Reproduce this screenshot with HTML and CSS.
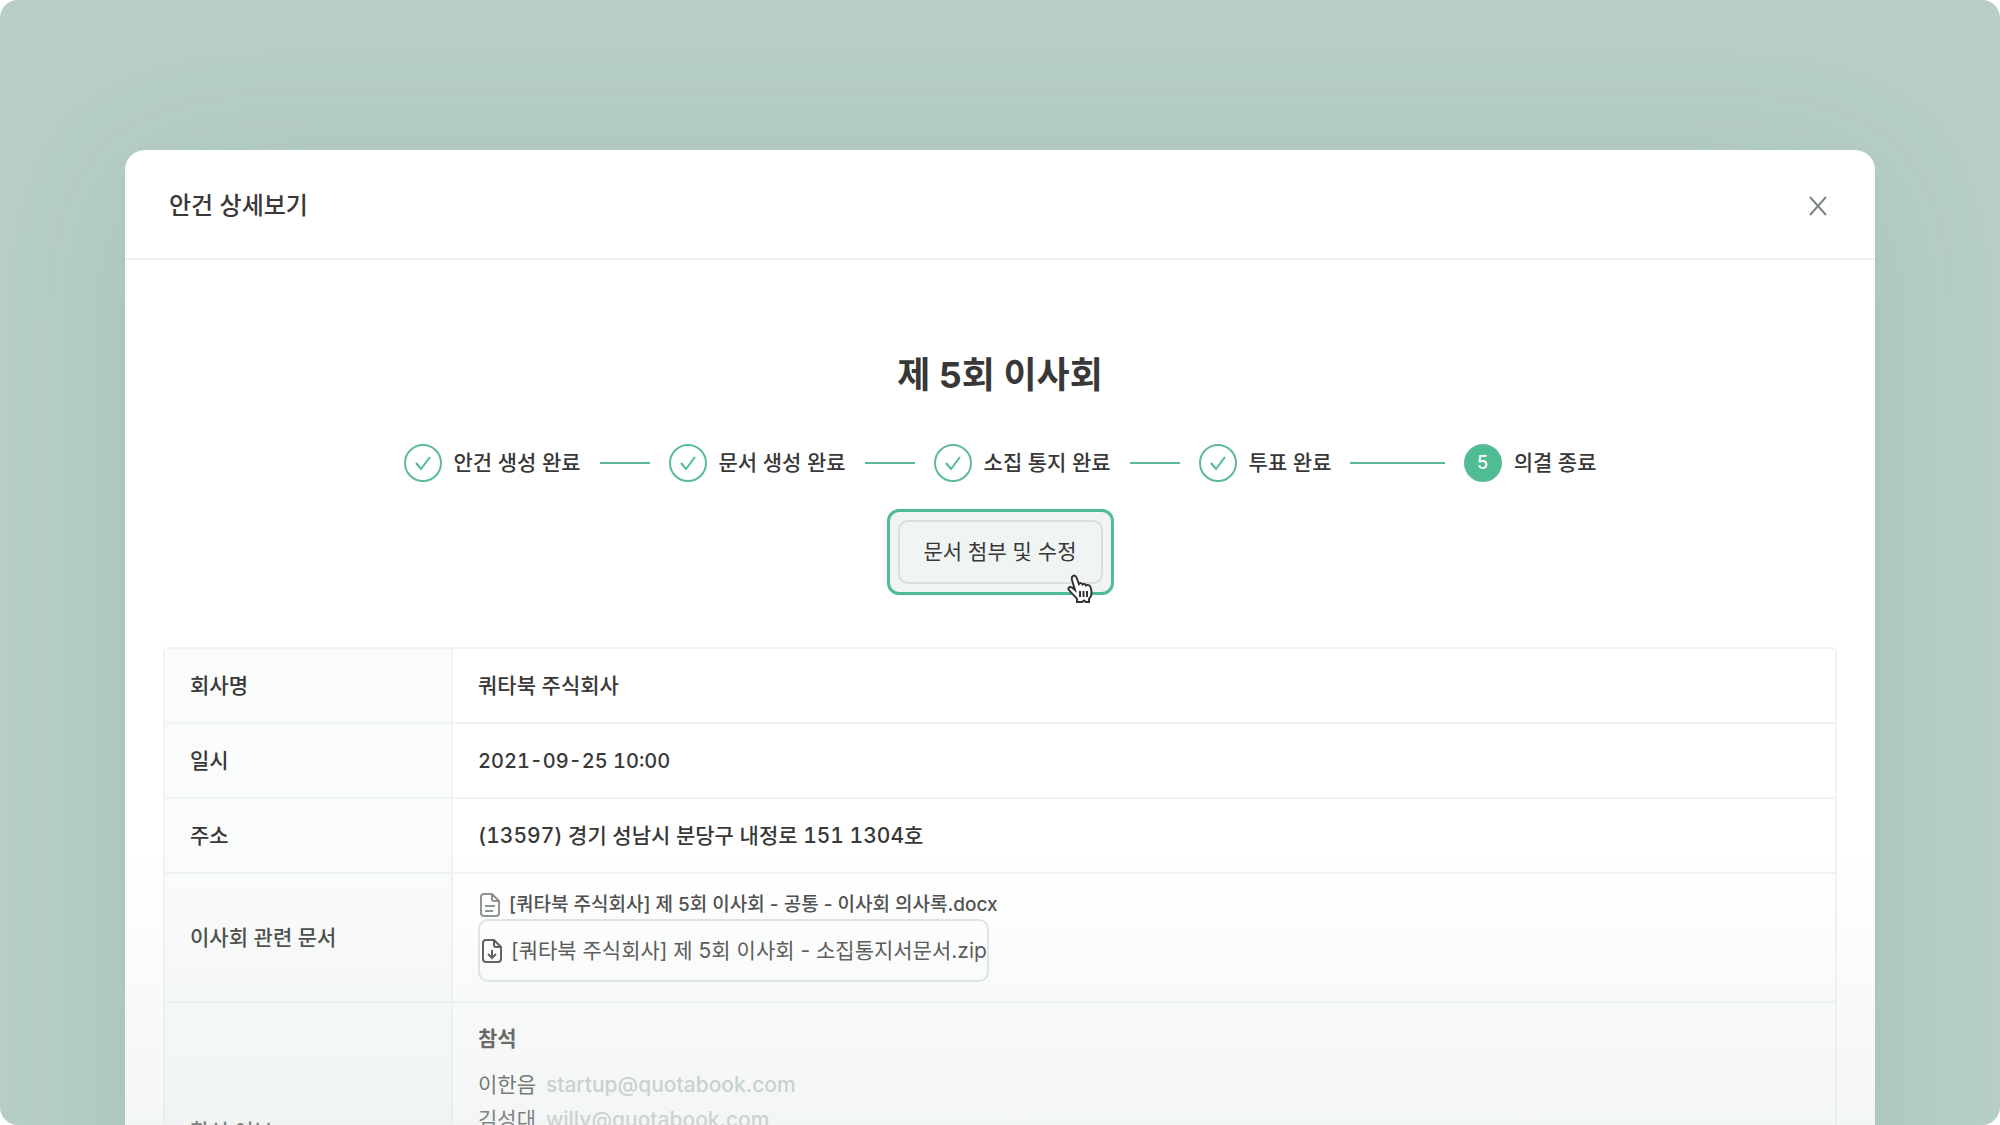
FILE: index.html
```
<!DOCTYPE html>
<html lang="ko">
<head>
    <meta charset="UTF-8">
    <meta name="viewport" content="width=device-width, initial-scale=1.0">
    <title>안건 상세보기</title>
    <link rel="stylesheet" href="styles.css">
</head>
<body>
    <div class="stage">
        <section class="modal">
            <header class="modal-header">
                <h2>안건 상세보기</h2>
                <button type="button" class="close" aria-label="닫기">
                    <svg width="18" height="20" viewBox="0 0 18 20"><path d="M1 1L17 19M17 1L1 19"/></svg>
                </button>
            </header>
            <div class="modal-body">
                <h1>제 5회 이사회</h1>
                <ol class="steps">
                    <li>
                        <span class="circle"><svg width="16" height="16" viewBox="0 0 16 16"><path d="M1 8L6 14L15 2"/></svg></span>
                        <span class="label">안건 생성 완료</span>
                    </li>
                    <li>
                        <span class="circle"><svg width="16" height="16" viewBox="0 0 16 16"><path d="M1 8L6 14L15 2"/></svg></span>
                        <span class="label">문서 생성 완료</span>
                    </li>
                    <li>
                        <span class="circle"><svg width="16" height="16" viewBox="0 0 16 16"><path d="M1 8L6 14L15 2"/></svg></span>
                        <span class="label">소집 통지 완료</span>
                    </li>
                    <li>
                        <span class="circle"><svg width="16" height="16" viewBox="0 0 16 16"><path d="M1 8L6 14L15 2"/></svg></span>
                        <span class="label">투표 완료</span>
                    </li>
                    <li>
                        <span class="circle active">5</span>
                        <span class="label">의결 종료</span>
                    </li>
                </ol>
                <div class="action">
                    <button type="button" class="edit-button"><span>문서 첨부 및 수정</span></button>
                    <svg class="cursor" width="27" height="30" viewBox="0 0 27 30">
                        <path d="M6 2C7.500 1 9 2 9.500 3.500L12 10C13 8.500 15 9 15.500 10.500C16.500 9.500 18.500 10 19 11.500C20.500 10.500 23 11 23.500 13C24.500 16 25 19 24 22L22 25V28H19L17 26.500L15 28H10V25C8 22 5 20 2 16C0.500 14 2.500 12 5 13.500L8 16L5 6C4.500 4 5 2.500 6 2Z"/>
                        <path d="M13 17V23M16.500 17V23M20 17V23"/>
                    </svg>
                </div>
                <table class="detail">
                    <tr>
                        <th scope="row">회사명</th>
                        <td>쿼타북 주식회사</td>
                    </tr>
                    <tr>
                        <th scope="row">일시</th>
                        <td><time datetime="2021-09-25T10:00">2021-09-25 10:00</time></td>
                    </tr>
                    <tr>
                        <th scope="row">주소</th>
                        <td class="address">(13597) 경기 성남시 분당구 내정로 151 1304호</td>
                    </tr>
                    <tr>
                        <th scope="row">이사회 관련 문서</th>
                        <td class="files">
                            <a href="#" class="file">
                                <svg class="light" width="20" height="24" viewBox="0 0 20 24"><path d="M12 1H4Q1 1 1 4V20Q1 23 4 23H16Q19 23 19 20V8ZM12 1V6Q12 8 14 8H19M5 13H15M5 18H13"/></svg>
                                [쿼타북 주식회사] 제 5회 이사회 - 공통 - 이사회 의사록.docx
                            </a>
                            <a href="#" class="file boxed">
                                <svg width="20" height="24" viewBox="0 0 20 24"><path d="M12 1H4Q1 1 1 4V20Q1 23 4 23H16Q19 23 19 20V8ZM12 1V6Q12 8 14 8H19M10 11V18M6 15L10 19L14 15"/></svg>
                                [쿼타북 주식회사] 제 5회 이사회 - 소집통지서문서.zip
                            </a>
                        </td>
                    </tr>
                    <tr class="attend">
                        <th scope="row">참석 여부</th>
                        <td>
                            <h3>참석</h3>
                            <p>이한음 <a href="mailto:startup@quotabook.com">startup@quotabook.com</a></p>
                            <p>김성대 <a href="mailto:willy@quotabook.com">willy@quotabook.com</a></p>
                        </td>
                    </tr>
                </table>
            </div>
        </section>
        <div class="fade"></div>
    </div>
</body>
</html>
```
FILE: styles.css
```
* {
    box-sizing: border-box;
}
body {
    margin: 0;
    background-color: #fff;
    color: #383838;
    font-family: Inter, "Noto Sans CJK KR", sans-serif;
    font-size: 21px;
    font-weight: 500;
    line-height: 32px;
}
h1, h2, h3, p, ol {
    margin: 0;
    padding: 0;
}
button {
    font: inherit;
    color: inherit;
    cursor: pointer;
}
.stage {
    position: relative;
    height: 100vh;
    padding: 150px 125px 0;
    overflow: hidden;
    background-color: #b7cfc8;
    border-radius: 18px;
}
.modal {
    background-color: #fff;
    border-radius: 20px;
    box-shadow: 0 20px 150px rgba(60, 90, 80, 0.14);
}
.modal-header {
    display: flex;
    align-items: center;
    justify-content: space-between;
    height: 110px;
    padding: 4px 44px 0;
    border-bottom: 2px solid #eff4f2;
}
.modal-header h2 {
    font-size: 24px;
    font-weight: 500;
}
.close {
    padding: 4px;
    border: none;
    background: none;
    line-height: 0;
}
.close svg {
    fill: none;
    stroke: #7d8582;
    stroke-width: 2;
}
.modal-body {
    padding: 89px 38px 0;
}
h1 {
    font-size: 36px;
    font-weight: 700;
    line-height: 52px;
    text-align: center;
}
.steps {
    display: flex;
    max-width: 1193px;
    margin: 43px auto 27px;
    list-style: none;
}
.steps li {
    display: flex;
    flex: 1;
    align-items: center;
    gap: 12px;
    white-space: nowrap;
}
.steps li:last-child {
    flex: none;
}
.steps li:not(:last-child)::after {
    content: "";
    flex: 1;
    height: 2px;
    margin: 0 19px 0 7px;
    background-color: #5cba98;
}
.circle {
    display: flex;
    align-items: center;
    justify-content: center;
    width: 38px;
    height: 38px;
    border: 2px solid #5cba98;
    border-radius: 50%;
}
.circle svg {
    fill: none;
    stroke: #4fbd93;
    stroke-width: 2;
}
.circle.active {
    background-color: #4fbd93;
    color: #fff;
    font-size: 18px;
}
.action {
    position: relative;
    width: 227px;
    margin: 0 auto 52px;
}
.edit-button {
    display: block;
    width: 100%;
    padding: 8px;
    border: 3px solid #4fbd93;
    border-radius: 12px;
    background-color: #f0f4f3;
    font-weight: 400;
}
.edit-button span {
    display: block;
    padding: 14px 0;
    border: 2px solid #d8dfdc;
    border-radius: 10px;
}
.cursor {
    position: absolute;
    right: 20px;
    bottom: -9px;
    fill: #fff;
    stroke: #333;
    stroke-width: 2;
}
.detail {
    width: 100%;
    border: 2px solid #eff3f2;
    border-radius: 6px;
    border-spacing: 0;
}
.detail th,
.detail td {
    height: 75px;
    padding: 0 25px;
    border-bottom: 2px solid #eff3f2;
    font-weight: 500;
    text-align: left;
}
.detail th {
    width: 288px;
    border-right: 2px solid #eff3f2;
    background-color: #fafcfb;
}
.detail time,
.detail .address {
    font-variant-numeric: tabular-nums;
}
.detail time {
    font-size: 20px;
}
.detail .files {
    padding: 17px 25px 19px;
}
.file {
    display: flex;
    align-items: center;
    gap: 9px;
    width: fit-content;
    padding-left: 2px;
    color: #444;
    font-size: 19px;
    font-weight: 500;
    line-height: 28px;
    text-decoration: none;
}
.file svg {
    fill: none;
    stroke: #4a4a4a;
    stroke-width: 2;
}
.file svg.light {
    stroke: #858c89;
}
.file.boxed {
    height: 63px;
    border: 2px solid #dde3e1;
    border-radius: 10px;
    font-size: 21px;
    font-weight: 400;
}
.attend th,
.attend td {
    height: 258px;
    border-bottom: none;
}
.attend td {
    padding-top: 20px;
    vertical-align: top;
}
.attend h3 {
    margin-bottom: 12px;
    font-size: 21px;
    font-weight: 700;
}
.attend p {
    font-weight: 400;
    line-height: 35px;
}
.attend a {
    margin-left: 4px;
    color: #b9c4c0;
    font-weight: 500;
    text-decoration: none;
}
.fade {
    position: absolute;
    right: 125px;
    bottom: 0;
    left: 125px;
    height: 275px;
    background: linear-gradient(rgba(226, 234, 231, 0), rgba(226, 234, 231, 0.42));
    pointer-events: none;
}
```
